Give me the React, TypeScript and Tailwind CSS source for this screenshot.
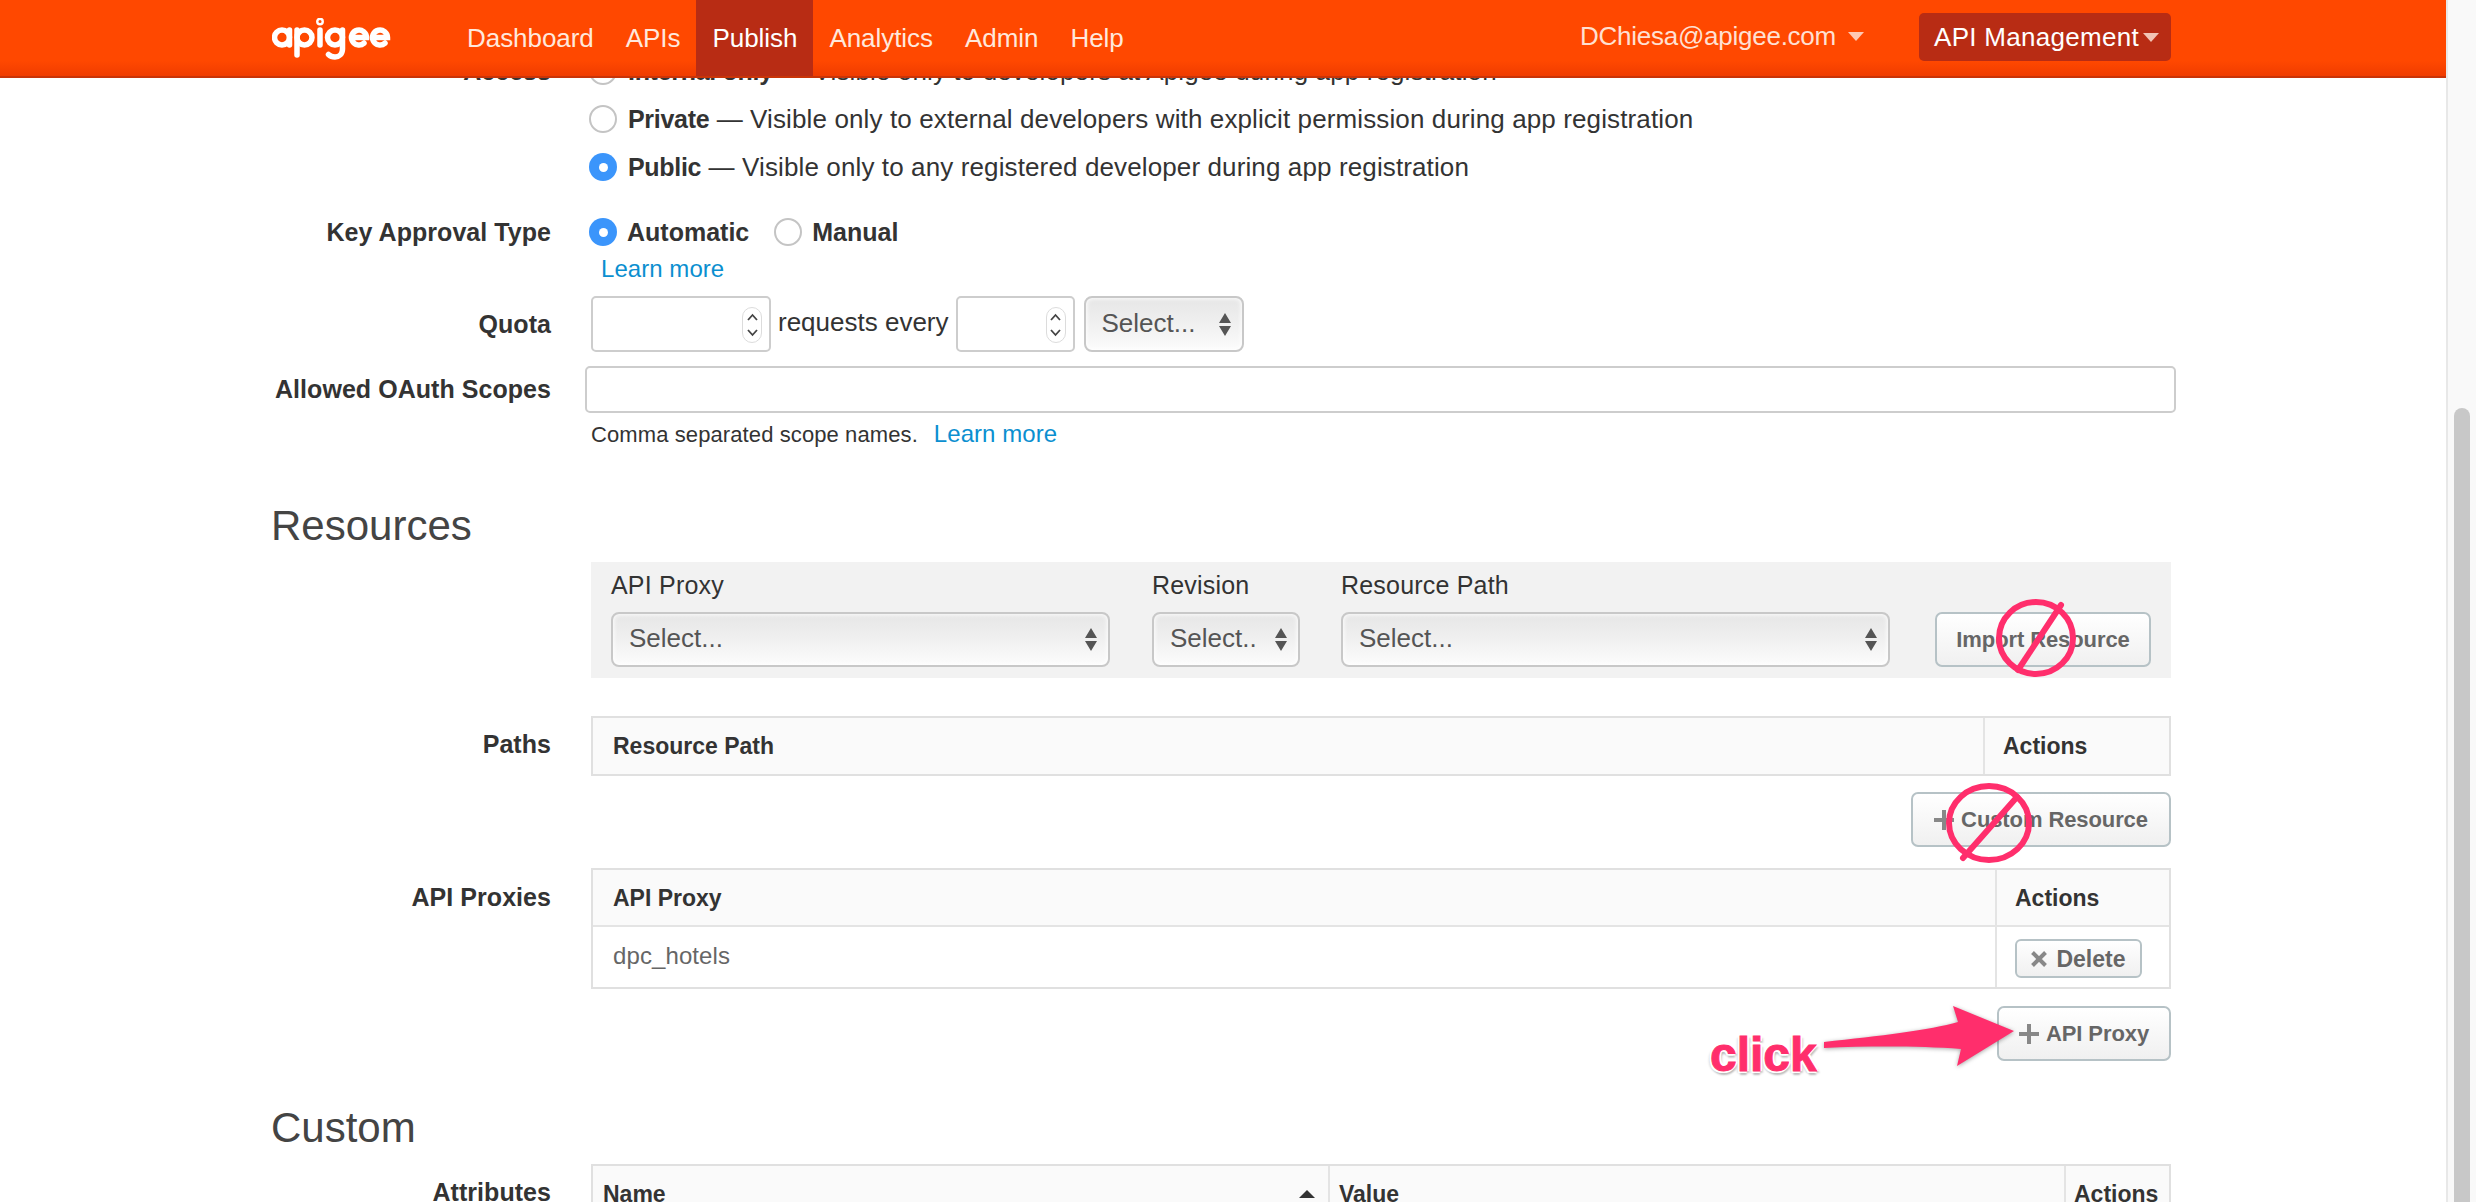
import React from 'react';

const FONT = "font-['Liberation_Sans',Arial,sans-serif]";

function ELetter({ cx }: { cx: number }) {
  return <path d={`M${cx - 7.5} 19.500h15a7.500 7.500 0 1 0-2.500 5.600`} />;
}

function Apigee() {
  return (
    <svg width="120" height="42" viewBox="0 0 120 42" className="text-white" fill="none" stroke="currentColor" strokeWidth="5.5" strokeLinecap="round">
      <circle cx="10" cy="19.500" r="7.500" />
      <path d="M17.500 12v15" />
      <path d="M25 12v25" />
      <circle cx="32.500" cy="19.500" r="7.500" />
      <path d="M48 12v15" />
      <circle cx="48" cy="3.500" r="1.200" />
      <circle cx="63" cy="19.500" r="7.500" />
      <path d="M70.500 12v19c0 5-3.500 8-7.500 8-3 0-5-1-6.500-2.500" />
      <ELetter cx={87} />
      <ELetter cx={108} />
    </svg>
  );
}

function Caret({ className }: { className: string }) {
  return <span className={`inline-block w-0 h-0 border-x-[8px] border-x-transparent border-t-[9px] ${className}`} />;
}

function Header() {
  const items = ['Dashboard', 'APIs', 'Publish', 'Analytics', 'Admin', 'Help'];
  return (
    <header className="absolute top-0 left-0 w-[2446px] h-[78px] z-10 flex items-start bg-gradient-to-b from-[#ff4800] from-80% to-[#f03c00] border-b-2 border-[#c93408] text-[26px] text-white">
      <div className="ml-[272px] mt-[18px] w-[122px] shrink-0"><Apigee /></div>
      <nav className="flex ml-[57px] h-[76px]">
        {items.map((t) => (
          <a key={t} className={`h-full flex items-center px-[16px] tracking-[-0.05px] ${t === 'Publish' ? 'bg-[#b82c14] text-white' : 'text-[#ffe8dc]'}`}>{t}</a>
        ))}
      </nav>
      <div className="ml-auto flex items-center h-[72px] mr-[275px] gap-[55px]">
        <div className="flex items-center gap-[12px] text-[#ffe0d2] tracking-[-0.25px]">DChiesa@apigee.com <Caret className="border-t-[#ffc8b4]" /></div>
        <div className="h-[48px] mt-[2px] w-[252px] pl-[15px] rounded-[5px] bg-[#b82c14] flex items-center gap-[4px] tracking-[0.3px] whitespace-nowrap">API Management <Caret className="border-t-[#f2c4b4]" /></div>
      </div>
    </header>
  );
}

function Radio({ on }: { on?: boolean }) {
  if (on) {
    return (
      <span className="shrink-0 w-[28px] h-[28px] rounded-full bg-[#3b95fb] flex items-center justify-center">
        <span className="w-[9px] h-[9px] rounded-full bg-white" />
      </span>
    );
  }
  return <span className="shrink-0 w-[28px] h-[28px] rounded-full border-2 border-[#c4c4c4] bg-white" />;
}

function Spinner() {
  return (
    <span className="absolute right-[7px] top-[9px] w-[20px] h-[36px] rounded-[10px] border border-[#dcdcdc] bg-white flex items-center justify-center">
      <svg width="13" height="26" viewBox="0 0 13 26" fill="none" stroke="#444" strokeWidth="1.8">
        <path d="M2 8l4.500-5 4.500 5M2 18l4.500 5 4.500-5" />
      </svg>
    </span>
  );
}

function NumInput({ w }: { w: string }) {
  return <div className={`relative h-[56px] rounded-[5px] border-2 border-[#cdcdcd] bg-white ${w}`}><Spinner /></div>;
}

function SelectBox({ w, text = 'Select...' }: { w: string; text?: string }) {
  return (
    <div className={`h-[55px] rounded-[8px] border-2 border-[#c8c8c8] bg-gradient-to-b from-[#e6e6e6] via-[#f0f0f0] to-[#fcfcfc] shadow-[inset_0_0_4px_1px_rgba(255,255,255,0.9)] flex items-center justify-between pl-[16px] pr-[11px] text-[#555] text-[26px] ${w}`}>
      <span className="pb-[3px] whitespace-nowrap">{text}</span>
      <svg width="12" height="23" viewBox="0 0 12 23" className="shrink-0" fill="#555">
        <path d="M6 0l6 10H0zM0 13h12L6 23z" />
      </svg>
    </div>
  );
}

function Button({ w, icon, children }: { w: string; icon?: React.ReactNode; children: React.ReactNode }) {
  return (
    <div className={`h-[55px] rounded-[7px] border-2 border-[#b6c2c6] bg-gradient-to-b from-[#fff] to-[#f0f0f0] flex items-center justify-center gap-[7px] text-[#666] font-bold text-[22px] tracking-[-0.1px] ${w}`}>
      {icon}{children}
    </div>
  );
}

function PlusIcon() {
  return (
    <svg width="20" height="20" viewBox="0 0 20 20" fill="none" stroke="#888" strokeWidth="4"><path d="M10 0v20M0 10h20" /></svg>
  );
}

function Row({ label, children, className = '' }: { label?: string; children: React.ReactNode; className?: string }) {
  return (
    <div className={`flex ${className}`}>
      <div className="w-[551px] shrink-0 text-right font-bold text-[#333] text-[25px] tracking-[0.05px]">{label}</div>
      <div className="ml-[40px] w-[1580px]">{children}</div>
    </div>
  );
}

function RadioLine({ on, name, desc }: { on?: boolean; name: string; desc: string }) {
  return (
    <div className="-ml-[2px] flex items-center gap-[11px] h-[38px] whitespace-nowrap text-[26px] tracking-[0.12px]">
      <Radio on={on} />
      <span><b className="text-[25px] tracking-[-0.3px]">{name}</b> — {desc}</span>
    </div>
  );
}

function Title({ children, className }: { children: React.ReactNode; className: string }) {
  return <h2 className={`ml-[271px] text-[42px] leading-[50px] text-[#444] ${className}`}>{children}</h2>;
}

function Th({ children, className = '' }: { children: React.ReactNode; className?: string }) {
  return <div className={`flex items-center font-bold text-[#333] text-[23px] ${className}`}>{children}</div>;
}

export default function App() {
  return (
    <div className={`relative w-[2476px] h-[1202px] overflow-hidden bg-white text-[#333] ${FONT}`}>
      <Header />

      {/* scroll track */}
      <div className="absolute top-0 right-0 bottom-0 w-[30px] bg-[#f9f9f9] border-l-2 border-[#e8e8e8] z-10">
        <div className="absolute top-[408px] bottom-0 left-[6px] w-[16px] rounded-t-full bg-[#c8c8c8]" />
      </div>

      <main className="pt-[52px]">
        <Row label="Access" className="h-[48px] leading-[38px]">
          <RadioLine name="Internal only" desc="Visible only to developers at Apigee during app registration" />
        </Row>
        <Row className="h-[48px]">
          <RadioLine name="Private" desc="Visible only to external developers with explicit permission during app registration" />
        </Row>
        <Row className="h-[48px]">
          <RadioLine on name="Public" desc="Visible only to any registered developer during app registration" />
        </Row>
        <Row label="Key Approval Type" className="mt-[17px] h-[38px] leading-[38px]">
          <div className="-ml-[2px] flex items-center gap-[10px] h-[38px] text-[25px] font-bold">
            <Radio on /><span>Automatic</span>
            <span className="ml-[15px] flex"><Radio /></span><span>Manual</span>
          </div>
        </Row>
        <Row className="h-[45px]">
          <a className="ml-[10px] block text-[#0b8fd0] text-[24px] tracking-[0.05px]">Learn more</a>
        </Row>
        <Row label="Quota" className="h-[70px] leading-[56px]">
          <div className="flex items-center gap-[7px]">
            <NumInput w="w-[180px]" />
            <span className="text-[26px] leading-none pb-[5px]">requests every</span>
            <NumInput w="w-[119px]" />
            <SelectBox w="w-[160px] ml-[2px] !h-[56px]" />
          </div>
        </Row>
        <Row label="Allowed OAuth Scopes" className="h-[48px] leading-[47px]">
          <div className="-ml-[6px] w-[1591px] h-[47px] rounded-[5px] border-2 border-[#cdcdcd] bg-white" />
        </Row>
        <Row className="h-[40px]">
          <div className="flex items-center h-[40px] gap-[16px]">
            <span className="text-[22px] tracking-[0.1px]">Comma separated scope names.</span>
            <a className="text-[#0b8fd0] text-[24px] tracking-[0.05px]">Learn more</a>
          </div>
        </Row>

        <Title className="mt-[47px]">Resources</Title>

        <Row className="mt-[11px]">
          <div className="bg-[#f2f2f2] h-[116px] w-[1580px] flex pl-[20px] pt-[5px]">
            <div className="w-[541px]">
              <div className="text-[25px] tracking-[0.2px] h-[45px]">API Proxy</div>
              <SelectBox w="w-[499px]" />
            </div>
            <div className="w-[189px]">
              <div className="text-[25px] tracking-[0.2px] h-[45px]">Revision</div>
              <SelectBox w="w-[148px]" text="Select.." />
            </div>
            <div className="w-[594px]">
              <div className="text-[25px] tracking-[0.2px] h-[45px]">Resource Path</div>
              <SelectBox w="w-[549px]" />
            </div>
            <div className="pt-[45px]">
              <Button w="w-[216px]">Import Resource</Button>
            </div>
          </div>
        </Row>

        <Row label="Paths" className="mt-[38px] leading-[56px]">
          <div className="h-[60px] w-[1580px] border-2 border-[#e0e0e0] bg-[#fafafa] flex">
            <Th className="flex-1 pl-[20px]">Resource Path</Th>
            <Th className="w-[186px] pl-[18px] border-l-2 border-[#e4e4e4]">Actions</Th>
          </div>
        </Row>
        <Row className="mt-[16px]">
          <div className="flex justify-end">
            <Button w="w-[260px]" icon={<PlusIcon />}>Custom Resource</Button>
          </div>
        </Row>

        <Row label="API Proxies" className="mt-[21px] leading-[58px]">
          <div className="w-[1580px] border-2 border-[#e0e0e0]">
            <div className="h-[57px] bg-[#fafafa] border-b-2 border-[#e4e4e4] flex">
              <Th className="flex-1 pl-[20px]">API Proxy</Th>
              <Th className="w-[174px] pl-[18px] border-l-2 border-[#e4e4e4]">Actions</Th>
            </div>
            <div className="h-[60px] flex">
              <div className="flex-1 pl-[20px] text-[24px] tracking-[0.1px] text-[#666] flex items-center pb-[2px]">dpc_hotels</div>
              <div className="w-[174px] pl-[18px] pt-[3px] border-l-2 border-[#e4e4e4] flex items-center">
                <div className="w-[127px] h-[39px] rounded-[6px] border-2 border-[#b6c2c6] bg-gradient-to-b from-[#fff] to-[#f0f0f0] flex items-center justify-center gap-[9px] text-[#666] font-bold text-[23px]">
                  <svg width="16" height="16" viewBox="0 0 16 16" stroke="#888" strokeWidth="4"><path d="M1.500 1.500l13 13M14.500 1.500l-13 13" /></svg>
                  Delete
                </div>
              </div>
            </div>
          </div>
        </Row>
        <Row className="mt-[17px]">
          <div className="flex justify-end">
            <Button w="w-[174px]" icon={<PlusIcon />}>API Proxy</Button>
          </div>
        </Row>

        <Title className="mt-[42px]">Custom</Title>

        <Row label="Attributes" className="mt-[11px] leading-[56px]">
          <div className="h-[80px] w-[1580px] border-2 border-b-0 border-[#e0e0e0] bg-[#fafafa] flex">
            <Th className="w-[735px] pl-[10px] pb-[22px] justify-between pr-[13px]">
              Name
              <span className="w-0 h-0 border-x-[8px] border-x-transparent border-b-[8px] border-b-[#333]" />
            </Th>
            <Th className="w-[736px] pl-[9px] pb-[22px] border-l-2 border-[#e4e4e4]">Value</Th>
            <Th className="flex-1 pl-[8px] pb-[22px] border-l-2 border-[#e4e4e4]">Actions</Th>
          </div>
        </Row>
      </main>

      {/* annotations drawn on top of the screenshot */}
      <svg width="84" height="82" viewBox="0 0 84 82" fill="none" stroke="#ff2e6c" strokeWidth="6" className="absolute left-[1994px] top-[597px] z-[5]">
        <ellipse cx="42" cy="41" rx="37" ry="36" />
        <path d="M67 8L24 73" strokeLinecap="round" />
      </svg>
      <svg width="90" height="84" viewBox="0 0 90 84" fill="none" stroke="#ff2e6c" strokeWidth="6" className="absolute left-[1944px] top-[782px] z-[5]">
        <ellipse cx="45" cy="41" rx="40" ry="37" />
        <path d="M73 15L19 76" strokeLinecap="round" />
      </svg>

      <svg width="200" height="70" viewBox="0 0 200 70" className="absolute left-[1820px] top-[1000px] z-[5] drop-shadow-[0_1px_2px_rgba(0,0,0,0.35)]">
        <path d="M4 42C60 36 110 30 138 22L133 6 194 31 137 66 141 49C100 46 50 46 4 48z" fill="#ff2e6c" />
      </svg>
      <span className="absolute left-[1710px] top-[1028px] z-[6] text-[#ff2e6c] font-bold text-[48px] leading-[54px] [-webkit-text-stroke:1px_#ff2e6c] [text-shadow:0_2px_0_#fff,0_-2px_0_#fff,2px_0_0_#fff,-2px_0_0_#fff,-2px_2px_0_#fff,2px_-2px_0_#fff,-2px_-2px_0_#fff,0_4px_2px_#bbb,3px_2px_2px_#ccc,-3px_2px_2px_#ddd]">click</span>
    </div>
  );
}
